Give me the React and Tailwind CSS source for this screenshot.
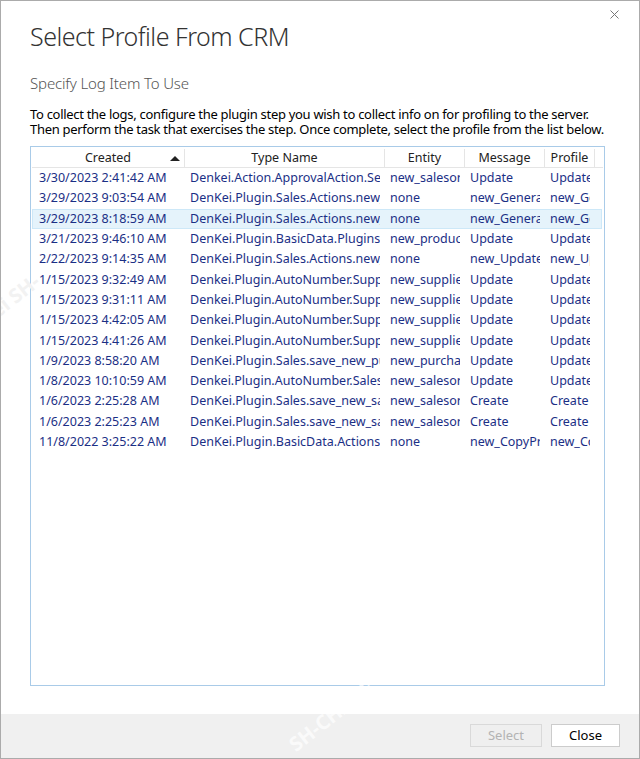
import React from 'react';

const rows = [
    ['3/30/2023 2:41:42 AM', 'Denkei.Action.ApprovalAction.SetApproval', 'new_salesorder', 'Update', 'Update'],
    ['3/29/2023 9:03:54 AM', 'DenKei.Plugin.Sales.Actions.new_GenerateOrder', 'none', 'new_GenerateOrder', 'new_GenerateOrder'],
    ['3/29/2023 8:18:59 AM', 'DenKei.Plugin.Sales.Actions.new_GenerateOrder', 'none', 'new_GenerateOrder', 'new_GenerateOrder'],
    ['3/21/2023 9:46:10 AM', 'DenKei.Plugin.BasicData.Plugins.save_product', 'new_product', 'Update', 'Update'],
    ['2/22/2023 9:14:35 AM', 'DenKei.Plugin.Sales.Actions.new_UpdateOrder', 'none', 'new_UpdateOrder', 'new_UpdateOrder'],
    ['1/15/2023 9:32:49 AM', 'Denkei.Plugin.AutoNumber.Supplier', 'new_supplier', 'Update', 'Update'],
    ['1/15/2023 9:31:11 AM', 'Denkei.Plugin.AutoNumber.Supplier', 'new_supplier', 'Update', 'Update'],
    ['1/15/2023 4:42:05 AM', 'Denkei.Plugin.AutoNumber.Supplier', 'new_supplier', 'Update', 'Update'],
    ['1/15/2023 4:41:26 AM', 'Denkei.Plugin.AutoNumber.Supplier', 'new_supplier', 'Update', 'Update'],
    ['1/9/2023 8:58:20 AM', 'DenKei.Plugin.Sales.save_new_purchase', 'new_purchase', 'Update', 'Update'],
    ['1/8/2023 10:10:59 AM', 'Denkei.Plugin.AutoNumber.SalesOrder', 'new_salesorder', 'Update', 'Update'],
    ['1/6/2023 2:25:28 AM', 'DenKei.Plugin.Sales.save_new_salesorder', 'new_salesorder', 'Create', 'Create'],
    ['1/6/2023 2:25:23 AM', 'DenKei.Plugin.Sales.save_new_salesorder', 'new_salesorder', 'Create', 'Create'],
    ['11/8/2022 3:25:22 AM', 'DenKei.Plugin.BasicData.Actions.CopyProduct', 'none', 'new_CopyProduct', 'new_CopyProduct'],
];

const cols = [
    { name: 'Created', w: 'w-[153px]' },
    { name: 'Type Name', w: 'w-[200px]' },
    { name: 'Entity', w: 'w-[80px]' },
    { name: 'Message', w: 'w-[80px]' },
    { name: 'Profile', w: 'w-[50px]' },
];

const font = { fontFamily: '"Segoe UI", "Noto Sans", sans-serif' };

export default function App() {
    return (
        <div className="relative w-[640px] h-[759px] bg-white border border-[#ababab] flex flex-col overflow-hidden text-black" style={font}>
            {/* close glyph */}
            <svg className="absolute right-[20px] top-[9px]" width="9" height="9" viewBox="0 0 9 9">
                <path d="M0.5 0.5 L8.5 8.5 M8.5 0.5 L0.5 8.5" stroke="#777" strokeWidth="1" />
            </svg>

            <div className="flex-1 flex flex-col pl-[29px] pr-[34px] pt-[17px] pb-[28px]">
                <h1 className="text-[25px] font-light leading-[36px] tracking-[-0.5px] text-[#333]">Select Profile From CRM</h1>
                <h2 className="mt-[19px] text-[15px] font-light leading-[20px] tracking-[-0.15px] text-[#555]">Specify Log Item To Use</h2>
                <p className="mt-[14px] text-[13px] leading-[15px] tracking-[-0.3px] whitespace-nowrap">
                    To collect the logs, configure the plugin step you wish to collect info on for profiling to the server.
                    <br />
                    Then perform the task that exercises the step. Once complete, select the profile from the list below.
                </p>

                <div className="mt-[9px] flex-1 border border-[#a9cbe8] flex flex-col pl-[1px] pr-[1px]">
                    <div className="flex h-[21px] pt-[2px] border-b border-[#e5e5e5] text-[12.5px] text-[#222]">
                        {cols.map((c, i) => (
                            <div key={c.name} className={`${c.w} shrink-0 relative flex items-center justify-center border-r border-[#e5e5e5]`}>
                                <span className="leading-none">{c.name}</span>
                                {i === 0 && (
                                    <svg className="absolute right-[4px] top-[7px]" width="10" height="5" viewBox="0 0 10 5">
                                        <path d="M0 5 L5 0 L10 5 Z" fill="#222" />
                                    </svg>
                                )}
                            </div>
                        ))}
                    </div>
                    <div className="flex flex-col pr-[1px]">
                        {rows.map((r, ri) => (
                            <div
                                key={ri}
                                className={`flex h-[20.3px] items-center text-[12.5px] text-[#1b2f85] ${ri === 2 ? 'bg-[#e5f3fb] border border-[#cde8f8]' : 'border border-transparent'}`}
                            >
                                {r.map((cell, ci) => (
                                    <div key={ci} className={`${cols[ci].w} shrink-0 ${ci === 0 ? 'pl-[7px] pr-[5px] -ml-[1px]' : 'pl-[5px] pr-[5px]'}`}>
                                        <div className="overflow-hidden whitespace-nowrap leading-[18px]">{cell}</div>
                                    </div>
                                ))}
                            </div>
                        ))}
                    </div>
                </div>
            </div>

            <div className="h-[44px] bg-[#f0f0f0] flex items-center justify-end gap-[9px] pr-[19px] pb-[1px]">
                <button className="w-[72px] h-[23px] border border-[#d9d9d9] bg-[#efefef] text-[13px] text-[#b3b3b3] leading-none" style={font}>Select</button>
                <button className="w-[69px] h-[23px] border border-[#cccccc] bg-white text-[13px] text-black leading-none" style={font}>Close</button>
            </div>

            {/* watermark */}
            <span className="absolute left-[280px] top-[700px] -rotate-[38deg] text-[20px] font-bold text-white/70 pointer-events-none select-none">SH-CHXUE</span>
            <span className="absolute left-[-14px] top-[280px] -rotate-[38deg] text-[20px] font-bold text-[#f2f2f2] pointer-events-none select-none">ei SH-</span>
        </div>
    );
}
